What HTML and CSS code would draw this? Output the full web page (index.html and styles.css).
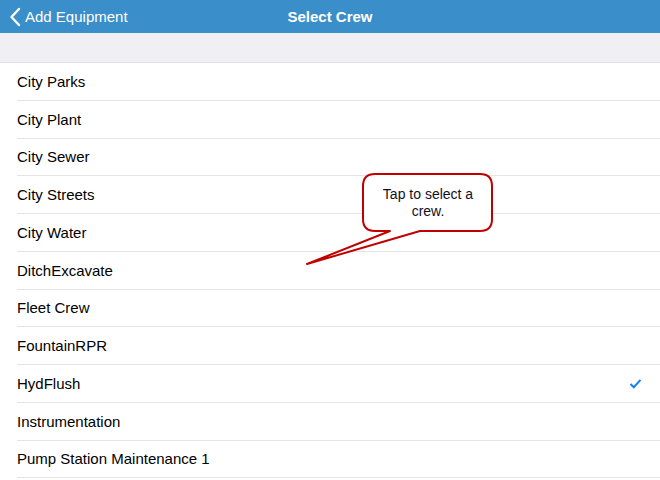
FILE: index.html
```html
<!DOCTYPE html>
<html>
<head>
<meta charset="utf-8">
<link rel="stylesheet" href="styles.css">
</head>
<body>
<div class="screen">
  <header class="navbar">
    <div class="back">
      <svg class="chev" width="12" height="20" viewBox="0 0 12 20"><path d="M10 2 L2.5 10 L10 18" fill="none" stroke="#fff" stroke-width="2.4" stroke-linecap="round" stroke-linejoin="round"/></svg>
      <span>Add Equipment</span>
    </div>
    <div class="title">Select Crew</div>
  </header>
  <div class="band"></div>
  <ul class="list">
    <li class="row"><span>City Parks</span></li>
    <li class="row"><span>City Plant</span></li>
    <li class="row"><span>City Sewer</span></li>
    <li class="row"><span>City Streets</span></li>
    <li class="row"><span>City Water</span></li>
    <li class="row"><span>DitchExcavate</span></li>
    <li class="row"><span>Fleet Crew</span></li>
    <li class="row"><span>FountainRPR</span></li>
    <li class="row"><span>HydFlush</span>
      <svg class="check" width="13" height="11" viewBox="0 0 13 11"><path d="M1.5 6 L4.8 9.2 L11.5 1.8" fill="none" stroke="#157efb" stroke-width="2"/></svg>
    </li>
    <li class="row"><span>Instrumentation</span></li>
    <li class="row"><span>Pump Station Maintenance 1</span></li>
  </ul>
  <div class="callout">
    <svg class="callout-shape" width="200" height="100" viewBox="0 0 200 100">
      <path d="M72 1 H177 Q189 1 189 13 V46 Q189 58 177 58 H117 L4 91 L87 58 H72 Q60 58 60 46 V13 Q60 1 72 1 Z" fill="#fff" stroke="#c00000" stroke-width="2" stroke-linejoin="round"/>
    </svg>
    <div class="callout-text">Tap to select a<br>crew.</div>
  </div>
</div>
</body>
</html>
```
FILE: styles.css
```css
html, body {
  margin: 0;
  padding: 0;
  background: #fff;
}
.screen {
  position: relative;
  width: 660px;
  height: 480px;
  overflow: hidden;
  font-family: "Liberation Sans", Arial, sans-serif;
}
.navbar {
  height: 33px;
  background: #3a8ec9;
  color: #fff;
  display: flex;
  align-items: center;
  position: relative;
  font-size: 15px;
}
.back {
  display: flex;
  align-items: center;
  padding-left: 9px;
  gap: 4px;
}
.chev {
  display: block;
}
.title {
  position: absolute;
  left: 0;
  right: 0;
  text-align: center;
  font-weight: bold;
  pointer-events: none;
}
.band {
  height: 29px;
  background: #efeff4;
  border-bottom: 1px solid #e2e2e6;
}
.list {
  list-style: none;
  margin: 0;
  padding: 0;
}
.row {
  height: 36.75px;
  margin-left: 17px;
  padding-right: 18px;
  border-bottom: 1px solid #e4e4e6;
  display: flex;
  align-items: center;
  justify-content: space-between;
  font-size: 15px;
  color: #000;
}
.check {
  display: block;
}
.callout {
  position: absolute;
  left: 303px;
  top: 173px;
  width: 200px;
  height: 100px;
}
.callout-shape {
  position: absolute;
  left: 0;
  top: 0;
}
.callout-text {
  position: absolute;
  left: 62px;
  top: 13px;
  width: 126px;
  text-align: center;
  font-family: "Liberation Sans", Arial, sans-serif;
  font-size: 14px;
  line-height: 17px;
  color: #111122;
}
```
